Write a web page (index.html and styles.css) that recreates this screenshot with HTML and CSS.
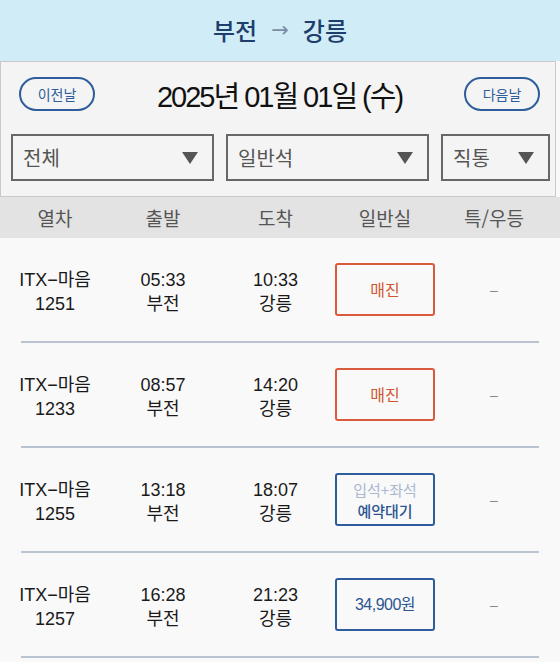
FILE: index.html
```html
<!DOCTYPE html>
<html lang="ko">
<head>
    <meta charset="UTF-8">
    <meta name="viewport" content="width=device-width, initial-scale=1.0">
    <title>열차 조회</title>
    <link rel="stylesheet" href="styles.css">
</head>
<body>

<div class="route">
    <span>부전</span>
    <span class="arrow">&#8594;</span>
    <span>강릉</span>
</div>

<div class="panel">
    <div class="date-nav">
        <button class="pill">이전날</button>
        <div class="date">2025년 01월 01일 (수)</div>
        <button class="pill">다음날</button>
    </div>
    <div class="filters">
        <div class="select wide"><span>전체</span><span class="caret"></span></div>
        <div class="select wide"><span>일반석</span><span class="caret"></span></div>
        <div class="select narrow"><span>직통</span><span class="caret"></span></div>
    </div>
</div>

<div class="table-head">
    <div>열차</div>
    <div>출발</div>
    <div>도착</div>
    <div>일반실</div>
    <div>특/우등</div>
</div>

<div class="rows">
    <div class="row">
        <div class="cell text">ITX&minus;마음<br>1251</div>
        <div class="cell text">05:33<br>부전</div>
        <div class="cell text">10:33<br>강릉</div>
        <div class="cell"><div class="seat sold">매진</div></div>
        <div class="cell dash">&ndash;</div>
    </div>
    <div class="row">
        <div class="cell text">ITX&minus;마음<br>1233</div>
        <div class="cell text">08:57<br>부전</div>
        <div class="cell text">14:20<br>강릉</div>
        <div class="cell"><div class="seat sold">매진</div></div>
        <div class="cell dash">&ndash;</div>
    </div>
    <div class="row">
        <div class="cell text">ITX&minus;마음<br>1255</div>
        <div class="cell text">13:18<br>부전</div>
        <div class="cell text">18:07<br>강릉</div>
        <div class="cell">
            <div class="seat wait">
                <span class="sub">입석+좌석</span>
                <span class="main">예약대기</span>
            </div>
        </div>
        <div class="cell dash">&ndash;</div>
    </div>
    <div class="row">
        <div class="cell text">ITX&minus;마음<br>1257</div>
        <div class="cell text">16:28<br>부전</div>
        <div class="cell text">21:23<br>강릉</div>
        <div class="cell"><div class="seat price">34,900원</div></div>
        <div class="cell dash">&ndash;</div>
    </div>
</div>

</body>
</html>
```

FILE: styles.css
```css
body {
    margin: 0;
    background-color: #f9f9f9;
    font-family: "Liberation Sans", "Noto Sans CJK KR", sans-serif;
    color: #222;
}
.route {
    height: 61px;
    background-color: #d0ecf6;
    display: flex;
    justify-content: center;
    align-items: center;
    gap: 14px;
    font-family: "Noto Sans CJK KR", sans-serif;
    font-size: 24px;
    font-weight: 500;
    color: #1e3e6b;
    padding-bottom: 2px;
    box-sizing: border-box;
}
.route .arrow {
    font-family: "DejaVu Sans", sans-serif;
    font-weight: normal;
    color: #7d8ea3;
    font-size: 21px;
}
.panel {
    width: 556px;
    height: 136px;
    box-sizing: border-box;
    background-color: #f4f4f4;
    border: 1px solid #c9c9c9;
    padding: 11px 5px 0 10px;
}
.date-nav {
    display: flex;
    align-items: center;
    justify-content: space-between;
    padding: 0 10px 0 8px;
}
.pill {
    width: 76px;
    height: 34px;
    border: 2px solid #2d5d9a;
    border-radius: 17px;
    background: transparent;
    color: #2d5d9a;
    font-family: "Noto Sans CJK KR", sans-serif;
    font-size: 14px;
    padding: 0;
}
.date {
    font-size: 29px;
    letter-spacing: -2px;
    color: #111;
}
.filters {
    display: flex;
    gap: 12px;
    margin-top: 19px;
}
.select {
    flex-shrink: 0;
    height: 47px;
    box-sizing: border-box;
    border: 2px solid #676767;
    display: flex;
    align-items: center;
    justify-content: space-between;
    padding: 0 14px 0 10px;
    font-family: "Noto Sans CJK KR", sans-serif;
    font-size: 20px;
    color: #555;
}
.select.wide {
    width: 203px;
}
.select.narrow {
    width: 109px;
}
.caret {
    width: 0;
    height: 0;
    border-left: 8px solid transparent;
    border-right: 8px solid transparent;
    border-top: 12px solid #555;
}
.table-head,
.row {
    display: grid;
    grid-template-columns: 110px 106px 119px 100px 118px;
}
.table-head {
    height: 41px;
    background-color: #e3e3e3;
    align-items: center;
    font-family: "Noto Sans CJK KR", sans-serif;
    font-size: 19px;
    color: #555;
    text-align: center;
}
.row {
    height: 105px;
    box-sizing: border-box;
    align-items: center;
    position: relative;
    padding-bottom: 2px;
}
.row::after {
    content: "";
    position: absolute;
    left: 21px;
    width: 518px;
    bottom: 0;
    height: 2px;
    background-color: #bac3d1;
}
.cell {
    display: flex;
    justify-content: center;
    text-align: center;
    font-size: 18px;
    line-height: 24px;
    color: #1a1a1a;
}
.cell.text {
    padding-top: 5px;
}
.dash {
    color: #888;
    font-size: 14px;
}
.seat {
    width: 100px;
    height: 53px;
    box-sizing: border-box;
    border: 2px solid #2d5d9a;
    border-radius: 3px;
    display: flex;
    flex-direction: column;
    justify-content: center;
    align-items: center;
    font-family: "Noto Sans CJK KR", sans-serif;
    font-size: 15px;
    line-height: 21px;
    color: #2b5591;
}
.seat.sold {
    border-color: #d95a3c;
    color: #d4532f;
    font-size: 16px;
}
.seat .sub {
    color: #a9b8d0;
}
.seat .main {
    font-weight: 500;
}
.seat.price {
    font-family: "Liberation Sans", "Noto Sans CJK KR", sans-serif;
    font-size: 16px;
    letter-spacing: -0.5px;
}
```
